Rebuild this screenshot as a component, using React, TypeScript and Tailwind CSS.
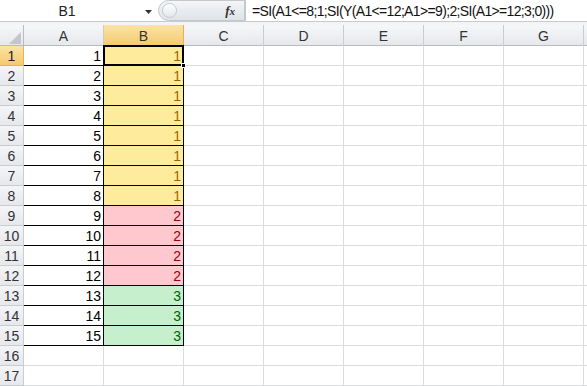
import React from "react";

const COLS = ["A", "B", "C", "D", "E", "F", "G"];

function bVal(n: number) {
  if (n <= 8) return 1;
  if (n <= 12) return 2;
  return 3;
}

const cellB: Record<number, string> = {
  1: "border-b border-r border-b-black border-r-black bg-[#ffeb9c] text-[#9c6500]",
  2: "border-b border-r border-b-black border-r-black bg-[#ffc7ce] text-[#9c0006]",
  3: "border-b border-r border-b-black border-r-black bg-[#c6efce] text-[#006100]",
};

export default function App() {
  const rows = Array.from({ length: 17 }, (_, i) => i + 1);
  return (
    <div
      className="w-[587px] h-[386px] overflow-hidden bg-white text-[#000] leading-[18px]"
      style={{ fontFamily: '"Liberation Sans", Arial, sans-serif' }}
    >
      {/* formula bar */}
      <div className="flex h-[22px] border-b border-[#c6cbd3] bg-white">
        <div className="relative flex w-[158px] items-center justify-center text-[14px] text-[#222]">
          <span className="mr-[24px]">B1</span>
          <svg className="absolute right-[6px] top-[10px]" width="7" height="4" viewBox="0 0 7 4">
            <path d="M0 0h7L3.5 4z" fill="#333" />
          </svg>
        </div>
        <div className="flex w-[87px] items-center rounded-l-[11px] border border-[#c3c8cf] bg-gradient-to-b from-[#f4f5f7] to-[#dfe3e8]">
          <div className="ml-[3px] h-[15px] w-[15px] rounded-full border border-[#c5cad0] bg-gradient-to-b from-[#ffffff] to-[#e3e6ea]" />
          <span
            className="ml-auto mr-[9px] text-[13px] italic font-bold text-[#333]"
            style={{ fontFamily: '"Liberation Serif", serif' }}
          >
            f<span className="text-[11px]">x</span>
          </span>
        </div>
        <div className="flex flex-1 items-center border-l border-[#c3c8cf] pl-[6px] text-[14px] tracking-[-0.65px] text-[#111]">
          =SI(A1&lt;=8;1;SI(Y(A1&lt;=12;A1&gt;=9);2;SI(A1&gt;=12;3;0)))
        </div>
      </div>
      <div className="h-[3px] bg-[#f3f4f6]" />
      {/* header row */}
      <div className="grid h-[21px] grid-rows-[21px] grid-cols-[24px_repeat(7,80px)_1fr] border-b border-[#b8bcc2] bg-gradient-to-b from-[#f6f7f9] to-[#e6e8ec] text-[14px] text-[#333]">
        <div className="relative border-r border-[#b8bcc2]">
          <svg className="absolute bottom-[2px] right-[2px]" width="12" height="12" viewBox="0 0 12 12">
            <path d="M12 0V12H0z" fill="#c3c6cb" />
          </svg>
        </div>
        {COLS.map((c) =>
          c === "B" ? (
            <div
              key={c}
              className="flex items-center justify-center border-r border-[#e3b454] bg-gradient-to-b from-[#fbe3a6] to-[#f5c96a]"
            >
              {c}
            </div>
          ) : (
            <div key={c} className="flex items-center justify-center border-r border-[#c9cdd2]">
              {c}
            </div>
          )
        )}
        <div />
      </div>
      {/* body */}
      {rows.map((r) => {
        const inData = r <= 15;
        const v = bVal(r);
        return (
          <div key={r} className="grid h-[20px] grid-rows-[20px] grid-cols-[24px_repeat(7,80px)_1fr] text-[14px]">
            {r === 1 ? (
              <div className="flex items-center justify-center border-b border-r border-[#e3b454] bg-gradient-to-b from-[#fbe3a6] to-[#f5c96a] text-[#222]">
                {r}
              </div>
            ) : (
              <div className="flex items-center justify-center border-b border-r border-[#c9cdd2] bg-gradient-to-b from-[#f4f5f7] to-[#e6e8ec] text-[#333]">
                {r}
              </div>
            )}
            {/* A */}
            {inData ? (
              <div className="flex items-center justify-end pr-[2px] border-b border-r border-b-black border-r-black">
                {r}
              </div>
            ) : (
              <div className="border-b border-r border-[#dadcdd]" />
            )}
            {/* B */}
            {inData ? (
              <div className={"relative flex items-center justify-end pr-[2px] " + cellB[v]}>
                {v}
                {r === 1 && (
                  <>
                    <div className="pointer-events-none absolute z-10 -left-[1px] -top-[1px] -right-[1px] -bottom-[1px] border-2 border-black" />
                    <div className="absolute z-10 -bottom-[3px] -right-[3px] h-[5px] w-[5px] border border-white bg-black" />
                  </>
                )}
              </div>
            ) : (
              <div className="border-b border-r border-[#dadcdd]" />
            )}
            {COLS.slice(2).map((c) => (
              <div key={c} className="border-b border-r border-[#dadcdd]" />
            ))}
            <div className="border-b border-[#dadcdd]" />
          </div>
        );
      })}
    </div>
  );
}
